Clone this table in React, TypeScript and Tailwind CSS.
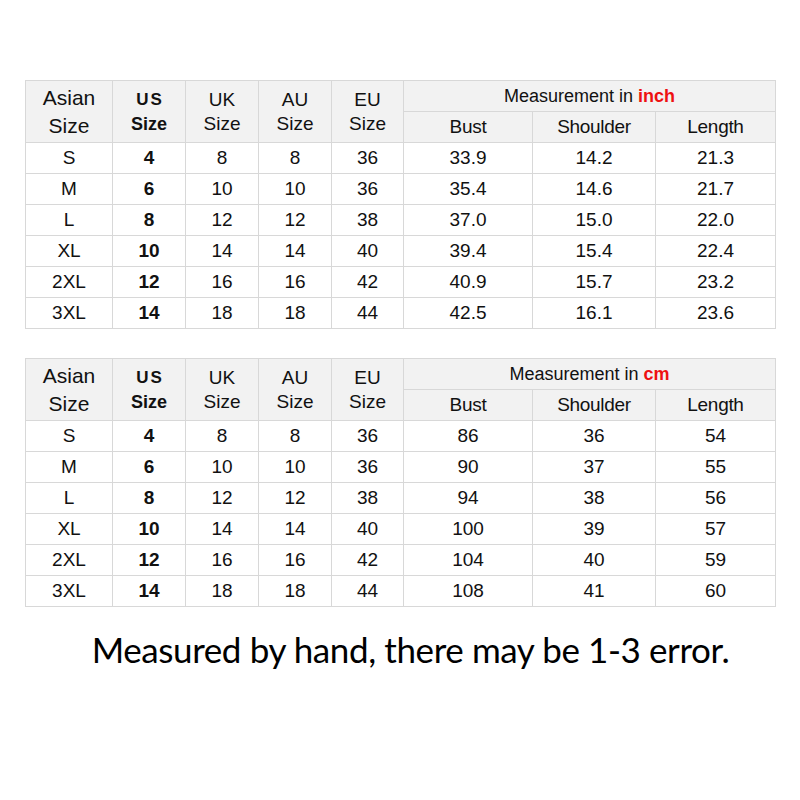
const ROWS = [
  ["S", "4", "8", "8", "36"],
  ["M", "6", "10", "10", "36"],
  ["L", "8", "12", "12", "38"],
  ["XL", "10", "14", "14", "40"],
  ["2XL", "12", "16", "16", "42"],
  ["3XL", "14", "18", "18", "44"],
];

const INCH = [
  ["33.9", "14.2", "21.3"],
  ["35.4", "14.6", "21.7"],
  ["37.0", "15.0", "22.0"],
  ["39.4", "15.4", "22.4"],
  ["40.9", "15.7", "23.2"],
  ["42.5", "16.1", "23.6"],
];

const CM = [
  ["86", "36", "54"],
  ["90", "37", "55"],
  ["94", "38", "56"],
  ["100", "39", "57"],
  ["104", "40", "59"],
  ["108", "41", "60"],
];

const head = "bg-[#f2f2f2] flex items-center justify-center text-center";
const cell = "bg-white flex items-center justify-center h-[30px] text-[19px]";

function SizeTable({ unit, data }: { unit: string; data: string[][] }) {
  return (
    <div
      className="grid w-[751px] gap-px bg-[#d8d8d8] p-px text-[#111]
        grid-cols-[86px_72px_72px_72px_71px_128px_122px_119px] auto-rows-[30px]"
    >
      {/* Size headers span both header rows */}
      <div className={`${head} row-span-2 flex-col text-[21px] leading-[28px]`}>
        <span>Asian</span>
        <span>Size</span>
      </div>
      <div className={`${head} row-span-2 flex-col font-bold`}>
        <span className="text-[17px] tracking-[2px] leading-[24px] pl-[2px]">US</span>
        <span className="text-[18px] leading-[24px]">Size</span>
      </div>
      {["UK", "AU", "EU"].map((s) => (
        <div key={s} className={`${head} row-span-2 flex-col text-[19px] leading-[24px]`}>
          <span>{s}</span>
          <span>Size</span>
        </div>
      ))}
      <div className={`${head} col-span-3 text-[18px]`}>
        Measurement in&nbsp;<span className="text-[#ee1111] font-bold">{unit}</span>
      </div>
      {["Bust", "Shoulder", "Length"].map((s) => (
        <div key={s} className={`${head} text-[19px] tracking-[-0.3px]`}>
          {s}
        </div>
      ))}

      {ROWS.map((r, i) => (
        <div key={r[0]} className="contents">
          <div className={cell}>{r[0]}</div>
          <div className={`${cell} font-bold text-[18px]`}>{r[1]}</div>
          <div className={cell}>{r[2]}</div>
          <div className={cell}>{r[3]}</div>
          <div className={cell}>{r[4]}</div>
          {data[i].map((v, j) => (
            <div key={j} className={cell}>
              {v}
            </div>
          ))}
        </div>
      ))}
    </div>
  );
}

export default function App() {
  return (
    <div
      className="w-[800px] h-[800px] bg-white pt-[80px] pl-[25px]"
      style={{ fontFamily: '"Liberation Sans", Arial, sans-serif' }}
    >
      <SizeTable unit="inch" data={INCH} />
      <div className="h-[29px]" />
      <SizeTable unit="cm" data={CM} />
      <div
        className="w-[751px] pl-[20px] mt-[17px] text-center text-[35px] tracking-[-0.4px] leading-[50px] text-black"
        style={{ fontFamily: 'Lato, "Noto Sans", sans-serif' }}
      >
        Measured by hand, there may be 1-3 error.
      </div>
    </div>
  );
}
